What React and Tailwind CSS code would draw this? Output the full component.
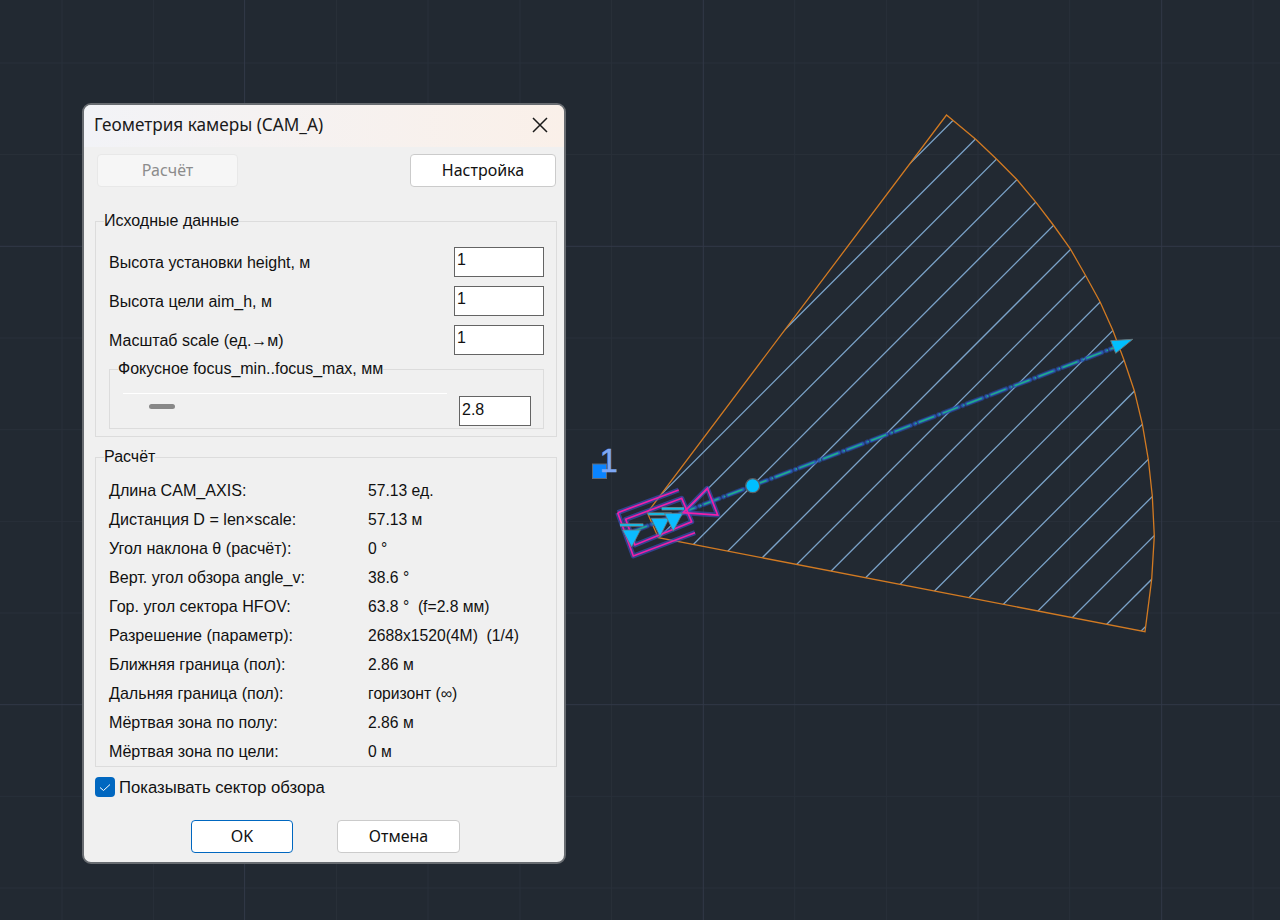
import React from 'react';

const sectorPoints = [
  [647.3, 512.7], [946.5, 115], [975.7, 139.3], [996.7, 159.3], [1017.3, 180], [1036, 202.3],
  [1053.3, 225], [1070, 248.3], [1085.3, 275], [1100, 301.7], [1112.7, 330], [1124, 360],
  [1134.3, 390.7], [1142.3, 424], [1148.3, 459.3], [1152.3, 496], [1154.3, 536], [1151.7, 579.3],
  [1145, 631.7], [658.3, 537.7],
].map((p) => p.join(',')).join(' ');

const hatch = [...Array(18)].map((_, i) => 1073.4 + 41.1 * i);

const minorX = [62, 153.4, 336.6, 428, 520, 611.6, 794.7, 886.4, 978, 1069.7, 1253];
const minorY = [63, 154.6, 338, 429.7, 521.4, 613, 796.3, 888];
const majorX = [244.6, 703.3, 1161.7];
const majorY = [246.3, 704.7];

const results = [
  ['Длина CAM_AXIS:', '57.13 ед.'],
  ['Дистанция D = len×scale:', '57.13 м'],
  ['Угол наклона θ (расчёт):', '0 °'],
  ['Верт. угол обзора angle_v:', '38.6 °'],
  ['Гор. угол сектора HFOV:', '63.8 °  (f=2.8 мм)'],
  ['Разрешение (параметр):', '2688x1520(4M)  (1/4)'],
  ['Ближняя граница (пол):', '2.86 м'],
  ['Дальняя граница (пол):', 'горизонт (∞)'],
  ['Мёртвая зона по полу:', '2.86 м'],
  ['Мёртвая зона по цели:', '0 м'],
];

const inputs = [
  ['Высота установки height, м', '1'],
  ['Высота цели aim_h, м', '1'],
  ['Масштаб scale (ед.→м)', '1'],
];

const magenta = [
  'M617.7 512.7 L678.7 490',
  'M617.7 512.7 L633.3 556 L695 532.7',
  'M625.7 519.3 L681.7 498.3 L691.7 521.7 L635 545 Z',
  'M683.3 512.7 L707.3 488.3 L717.7 515 Z',
];

const cams = [
  { tri: '622.5,530 640.5,530 631.7,547', bar: 'M620 525 H643.3' },
  { tri: '651,518.3 669,518.3 660,536.5', bar: 'M648.3 514 H671.7' },
  { tri: '664.5,513.3 682.5,513.3 673.3,531', bar: 'M661.7 508.7 H684' },
];

const Canvas = () => (
  <svg className="absolute inset-0" width="1280" height="920" viewBox="0 0 1280 920">
    <defs>
      <clipPath id="sector">
        <polygon points={sectorPoints} />
      </clipPath>
    </defs>

    {/* Grid */}
    {minorX.map((x) => <line key={x} x1={x} y1="0" x2={x} y2="920" stroke="#29303a" />)}
    {minorY.map((y) => <line key={y} x1="0" y1={y} x2="1280" y2={y} stroke="#29303a" />)}
    {majorX.map((x) => <line key={x} x1={x} y1="0" x2={x} y2="920" stroke="#323948" />)}
    {majorY.map((y) => <line key={y} x1="0" y1={y} x2="1280" y2={y} stroke="#323948" />)}

    {/* Sector */}
    <g clipPath="url(#sector)">
      {hatch.map((c) => (
        <line key={c} x1={c - 700} y1="700" x2={c - 100} y2="100" stroke="#7ba3c9" strokeWidth="1.3" />
      ))}
    </g>
    <polygon points={sectorPoints} fill="none" stroke="#d27a22" strokeWidth="1.3" />

    {/* Axis */}
    <line x1="632" y1="531.8" x2="1116" y2="347" stroke="#2a4fb0" strokeWidth="5" strokeDasharray="16.5 4.6 0.5 4" strokeLinecap="round" opacity="0.55" />
    <line x1="632" y1="531.8" x2="1116" y2="347" stroke="#2a58b4" strokeWidth="3" strokeDasharray="16.5 4.6 0.5 4" strokeLinecap="round" />
    <line x1="632" y1="531.8" x2="1116" y2="347" stroke="#1fb088" strokeWidth="1.5" strokeDasharray="16 5.6 1.5 2.5" />

    {/* Camera */}
    {magenta.map((d) => (
      <path key={d} d={d} fill="none" stroke="#3a50c0" strokeWidth="5" strokeLinejoin="round" opacity="0.65" />
    ))}
    {magenta.map((d) => (
      <path key={d} d={d} fill="none" stroke="#f01fa8" strokeWidth="1.7" />
    ))}
    {cams.map((c) => (
      <g key={c.bar}>
        <path d={c.bar} stroke="#6f7a80" strokeWidth="3.4" />
        <path d={c.bar} stroke="#12bde8" strokeWidth="1.8" />
        <polygon points={c.tri} fill="#0cbcff" stroke="#6b7378" strokeWidth="0.8" />
      </g>
    ))}

    <polygon points="1110.7,340.7 1132.7,339.3 1115.7,353.3" fill="#00bfff" stroke="#66787f" strokeWidth="1" />
    <circle cx="752.7" cy="485.7" r="7" fill="#00bfff" stroke="#5a5f66" strokeWidth="1.2" />

    {/* Node */}
    <rect x="592.5" y="464" width="14" height="14.5" fill="#0a84ff" stroke="#5f6a78" strokeWidth="1" />
    <text x="599.5" y="472" fontSize="33" fill="#7da7f5" stroke="#7da7f5" strokeWidth="0.5" fontFamily="'Liberation Sans', sans-serif">1</text>
  </svg>
);

const Field = ({ value, className }) => (
  <div className={`bg-white border border-[#646464] h-[30px] pl-[2px] text-[16px] leading-[24px] text-[#111] ${className}`}>
    {value}
  </div>
);

const Dialog = () => (
  <div className="relative w-[484px] h-[761px] bg-[#f0f0f0] border-2 border-[#686c71] rounded-[9px] overflow-hidden text-[#111] font-['Liberation_Sans',sans-serif] text-[16px]">
    {/* Title bar */}
    <div className="h-[42px] flex items-center justify-between pl-[10px] pr-[16px] pb-[2px] bg-linear-to-r from-[#f2f3f7] to-[#faf0e9]">
      <span className="font-['Noto_Sans',sans-serif] text-[17.2px] text-[#1a1a1a]">Геометрия камеры (CAM_A)</span>
      <svg width="16" height="16" viewBox="0 0 16 16" stroke="#1a1a1a" strokeWidth="1.5">
        <path d="M1 1 L15 15 M15 1 L1 15" />
      </svg>
    </div>

    {/* Top buttons */}
    <div className="flex justify-between pl-[13px] pr-[8px] mt-[7px] font-['Noto_Sans',sans-serif] text-[16px]">
      <div className="w-[141px] h-[33px] pb-[2px] flex items-center justify-center bg-[#f6f6f6] border border-[#e8e8e8] rounded-[4px] text-[#8c8c8c]">Расчёт</div>
      <div className="w-[146px] h-[33px] pb-[2px] flex items-center justify-center bg-white border border-[#cbcbcb] rounded-[4px]">Настройка</div>
    </div>

    {/* Source data */}
    <fieldset className="ml-[11px] mr-[7px] mt-[25px] border border-[#dcdcdc] pl-[13px] pr-[12px] pb-[7px]">
      <legend className="-ml-[5px] h-[18px] leading-[18px]">Исходные данные</legend>
      <div className="mt-[17px] flex flex-col gap-[9px]">
        {inputs.map(([label, value]) => (
          <div key={label} className="flex items-center justify-between h-[30px]">
            <span className="pt-[2px]">{label}</span>
            <Field value={value} className="w-[90px]" />
          </div>
        ))}
      </div>
      <fieldset className="mt-[5px] border border-[#dcdcdc] pl-[13px] pr-[12px] pb-[2px]">
        <legend className="-ml-[5px] h-[18px] leading-[18px]">Фокусное focus_min..focus_max, мм</legend>
        <div className="flex mt-[15px] gap-[12px]">
          <div className="w-[324px]">
            <div className="h-px bg-white" />
            <div className="ml-[26px] mt-[10px] w-[26px] h-[5px] rounded-full bg-[#888]" />
          </div>
          <Field value="2.8" className="w-[72px] mt-[3px] pl-[1px] leading-[25px]" />
        </div>
      </fieldset>
    </fieldset>

    {/* Results */}
    <fieldset className="ml-[11px] mr-[7px] mt-[11px] border border-[#dcdcdc] pl-[13px]">
      <legend className="-ml-[5px] h-[18px] leading-[18px]">Расчёт</legend>
      <div className="mt-[10px]">
        {results.map(([label, value]) => (
          <div key={label} className="flex items-center h-[29px]">
            <span className="w-[259px] text-[16.1px]">{label}</span>
            <span className="whitespace-pre text-[15.7px]">{value}</span>
          </div>
        ))}
      </div>
    </fieldset>

    {/* Checkbox */}
    <div className="ml-[11px] mt-[10px] h-[20px] flex items-center gap-[4px]">
      <div className="w-[20px] h-[20px] rounded-[4px] bg-[#0067c0]">
        <svg width="20" height="20" viewBox="0 0 20 20" fill="none" stroke="white" strokeWidth="1">
          <path d="M5 10.5 L8.5 13.5 L15 7.5" />
        </svg>
      </div>
      <span className="text-[16.7px] pt-[2px]">Показывать сектор обзора</span>
    </div>

    {/* Bottom buttons */}
    <div className="ml-[107px] mt-[23px] flex gap-[44px] font-['Noto_Sans',sans-serif] text-[16px]">
      <div className="w-[102px] h-[33px] pb-[2px] flex items-center justify-center bg-white border border-[#0067c0] rounded-[4px]">OK</div>
      <div className="w-[123px] h-[33px] pb-[2px] flex items-center justify-center bg-white border border-[#cbcbcb] rounded-[4px]">Отмена</div>
    </div>
  </div>
);

export default function App() {
  return (
    <div className="relative w-[1280px] h-[920px] overflow-hidden bg-[#222932] pl-[82px] pt-[103px]">
      <Canvas />
      <Dialog />
    </div>
  );
}
